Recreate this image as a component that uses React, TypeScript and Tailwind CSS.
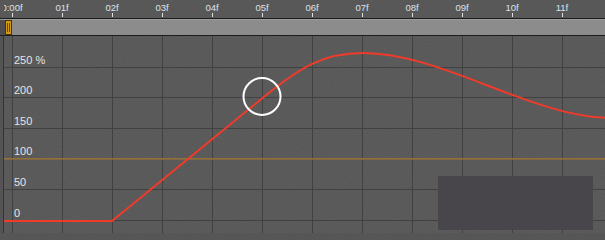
const frames = ['0:00f', '01f', '02f', '03f', '04f', '05f', '06f', '07f', '08f', '09f', '10f', '11f']
const gridY = [67, 97, 128, 158, 189, 220]
const values = ['250 %', '200', '150', '100', '50', '0']

function Ruler() {
  return (
    <div className="flex h-[18px] bg-[#585858]">
      <div className="w-[4px]" />
      <div className="relative flex-1 overflow-hidden">
        {frames.map((f, i) => (
          <div key={f} className="absolute top-0 h-full" style={{ left: 8 + i * 50 }}>
            <span className="absolute top-[3px] left-0 -translate-x-1/2 whitespace-nowrap text-[9.5px] leading-none text-[#dde3ec] [font-family:'Liberation_Sans',Arial,sans-serif]">
              {f}
            </span>
            <span className="absolute top-[13px] left-0 h-[4px] w-px bg-[#e0e0e0]" />
          </div>
        ))}
      </div>
    </div>
  )
}

function Scrubber() {
  return (
    <div className="flex h-[16px] bg-[#8c8c8c] border-t border-[#9a9a9a]">
      <div className="w-[5px] bg-[#4e4e4e]" />
      <div className="flex w-[7px] justify-center gap-[1px] border border-[#4a3500] bg-[#d39a17] pt-[2px] pb-[2px]">
        <span className="w-px bg-[#6b4c00]" />
        <span className="w-px bg-[#6b4c00]" />
      </div>
    </div>
  )
}

function Graph() {
  return (
    <div className="relative flex-1 bg-[#606060]">
      <svg className="absolute inset-0" width="601" height="197" viewBox="4 36 601 197">
        <defs>
          <filter id="grain" x="0" y="0" width="100%" height="100%">
            <feTurbulence type="fractalNoise" baseFrequency="0.9" numOctaves="1" seed="3" />
            <feColorMatrix values="0 0 0 0 0  0 0 0 0 0  0 0 0 0 0  0 0 0 0.12 0" />
          </filter>
        </defs>
        <rect x="4" y="36" width="601" height="197" filter="url(#grain)" />
        {frames.map((f, i) => (
          <rect key={f} x={12 + i * 50} y="36" width="1" height="197" fill="#414141" />
        ))}
        {gridY.map((y) => (
          <rect key={y} x="4" y={y} width="601" height="1" fill="#414141" />
        ))}
        <rect x="4" y="158" width="601" height="1.6" fill="#957139" />
        <path
          d="M4 221 L112 221 L265 96 C300 67.5 323 53 363 53 C443 53 532 118 612 118"
          fill="none"
          stroke="#f03b2b"
          strokeWidth="2"
        />
        <circle cx="262" cy="96.5" r="18.5" fill="none" stroke="#ffffff" strokeWidth="2" />
      </svg>
      {values.map((v, i) => (
        <span
          key={v}
          className="absolute left-[10px] whitespace-nowrap text-[11px] leading-none text-[#e4e4e4] [font-family:'Liberation_Sans',Arial,sans-serif]"
          style={{ top: gridY[i] - 12 - 36 }}
        >
          {v}
        </span>
      ))}
      <div className="absolute left-[434px] top-[140px] h-[54px] w-[155px] bg-[#48464a]" />
    </div>
  )
}

export default function App() {
  return (
    <div className="flex h-[240px] w-[605px] flex-col overflow-hidden bg-[#585858]">
      <Ruler />
      <div className="h-px bg-[#1c1c1c]" />
      <Scrubber />
      <div className="h-px bg-[#1c1c1c]" />
      <div className="flex h-[197px]">
        <div className="w-[4px] border-r border-[#343434] bg-[#545454]" />
        <Graph />
      </div>
      <div className="flex-1 bg-[#565656]" />
    </div>
  )
}
